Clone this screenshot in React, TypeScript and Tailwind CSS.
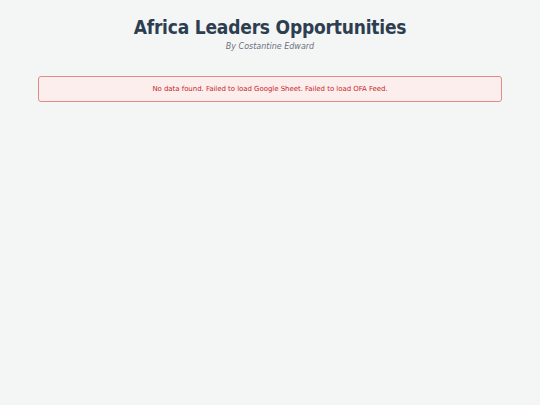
import React from 'react';

export default function App() {
  return (
    <div className="min-h-[405px] bg-[#f4f5f5] px-[38px] pt-[16px]" style={{ fontFamily: '"DejaVu Sans", Verdana, sans-serif' }}>
      <header className="text-center">
        <h1
          className="text-[19px] font-bold leading-[23px] tracking-[-0.2px] text-[#2c3e50]"
          style={{ fontFamily: '"DejaVu Sans Condensed", "DejaVu Sans", sans-serif' }}
        >
          Africa Leaders Opportunities
        </h1>
        <p className="mt-[3px] text-[8px] italic leading-[10px] text-[#6b7280]">By Costantine Edward</p>
      </header>
      <div className="mt-[24px] rounded-[3px] border border-[#e08a8a] bg-[#fdeeee] py-[8px] text-center text-[7px] leading-[8px] tracking-[-0.05px] text-[#c62828]">
        No data found. Failed to load Google Sheet. Failed to load OFA Feed.
      </div>
    </div>
  );
}
